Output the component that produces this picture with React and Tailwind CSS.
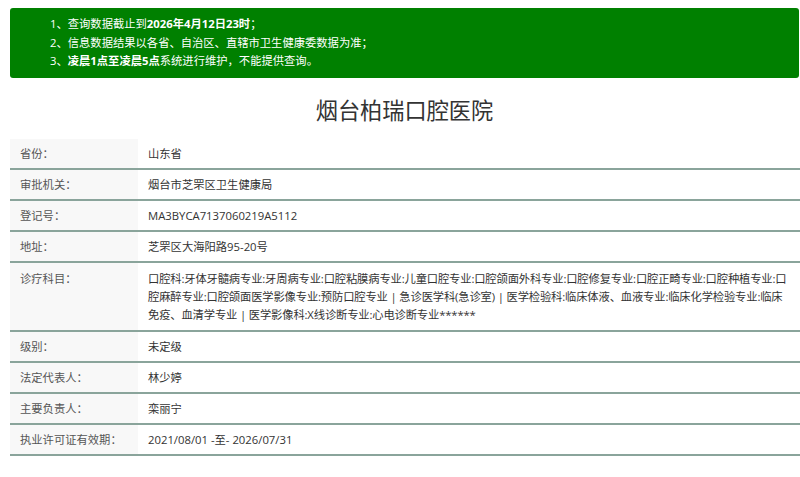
const rows = [
  ["省份：", ["山东省"]],
  ["审批机关：", ["烟台市芝罘区卫生健康局"]],
  ["登记号：", ["MA3BYCA7137060219A5112"]],
  ["地址：", ["芝罘区大海阳路95-20号"]],
  [
    "诊疗科目：",
    [
      "口腔科:牙体牙髓病专业:牙周病专业:口腔粘膜病专业:儿童口腔专业:口腔颌面外科专业:口腔修复专业:口腔正畸专业:口腔种植专业:口",
      "腔麻醉专业:口腔颌面医学影像专业:预防口腔专业 | 急诊医学科(急诊室) | 医学检验科:临床体液、血液专业:临床化学检验专业:临床",
      "免疫、血清学专业 | 医学影像科:X线诊断专业:心电诊断专业******",
    ],
  ],
  ["级别：", ["未定级"]],
  ["法定代表人：", ["林少婷"]],
  ["主要负责人：", ["栾丽宁"]],
  ["执业许可证有效期：", ["2021/08/01 -至- 2026/07/31"]],
];

export default function App() {
  return (
    <div className="min-h-[477px] bg-white pl-[10px] pr-[1px] pt-[8px] font-['Open_Sans','Noto_Sans_CJK_SC',sans-serif]">
      {/* Notice */}
      <div className="rounded-[3px] bg-[#008000] py-[7px] pl-[40px] text-[11.3px] leading-[18.5px] text-white">
        <p>1、查询数据截止到<b>2026年4月12日23时</b>；</p>
        <p>2、信息数据结果以各省、自治区、直辖市卫生健康委数据为准；</p>
        <p>3、<b>凌晨1点至凌晨5点</b>系统进行维护，不能提供查询。</p>
      </div>

      {/* Title */}
      <h1 className="pt-[20px] pb-[16px] text-center text-[22.2px] leading-[25px] text-[#333]">
        烟台柏瑞口腔医院
      </h1>

      {/* Detail table */}
      <div className="-mr-[1px] text-[11.3px] leading-[18px]">
        {rows.map(([label, lines]) => {
          const multi = lines.length > 1;
          return (
            <div key={label} className="flex border-b-2 border-[#8aa49b]">
              <div
                className={
                  multi
                    ? "w-[128px] shrink-0 bg-[#f8f8f8] pt-[7px] pb-[6px] pl-[10px] text-[#555]"
                    : "w-[128px] shrink-0 bg-[#f8f8f8] pt-[6px] pb-[5px] pl-[10px] text-[#555]"
                }
              >
                {label}
              </div>
              <div
                className={
                  multi
                    ? "flex-1 pt-[7px] pb-[6px] pl-[10px] text-[#333] whitespace-nowrap"
                    : "flex-1 pt-[6px] pb-[5px] pl-[10px] text-[#333]"
                }
              >
                {lines.map((l, i) => (
                  <div key={i} className={multi ? "tracking-[-0.15px]" : ""}>
                    {l}
                  </div>
                ))}
              </div>
            </div>
          );
        })}
      </div>
    </div>
  );
}
